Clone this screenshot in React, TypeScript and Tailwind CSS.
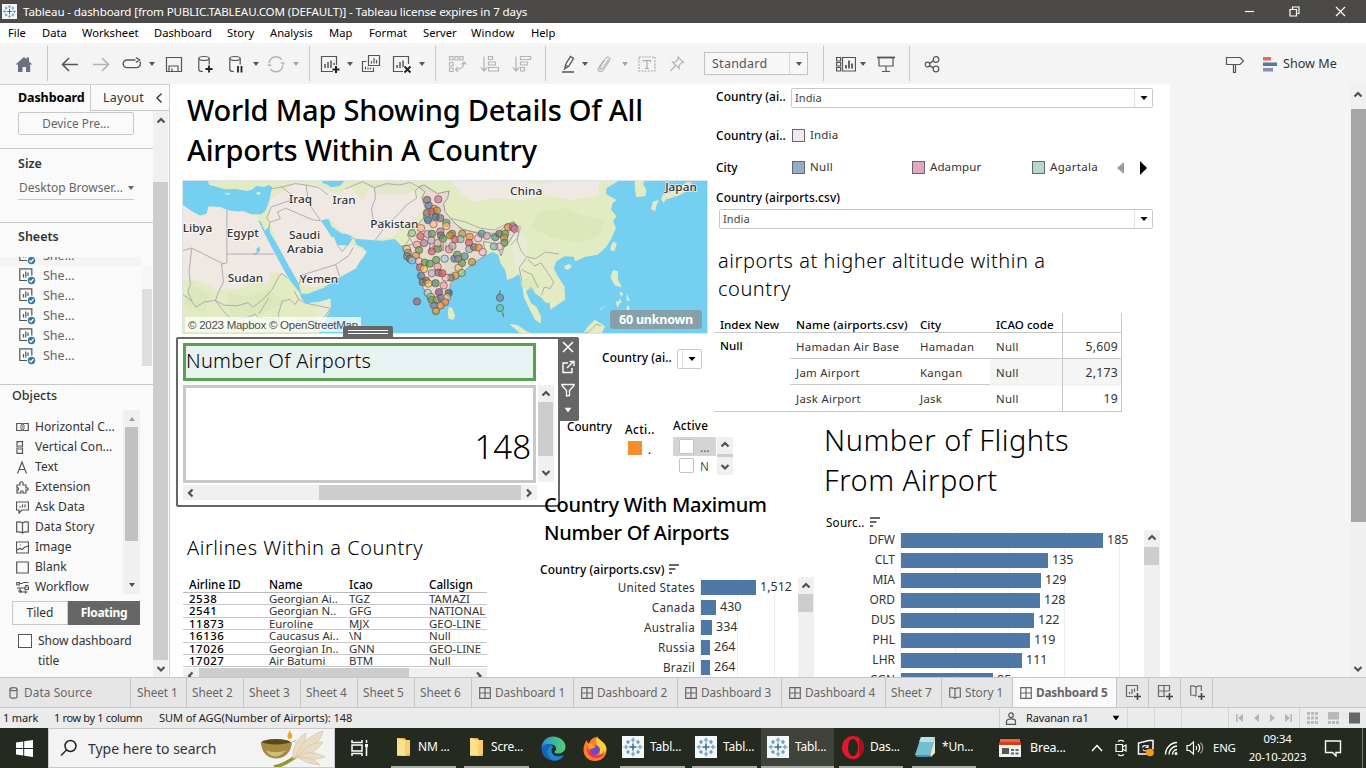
import React from "react";
import type { ReactNode } from "react";

/* ---------- shared bits ---------- */

function Svg({ children, className = "", w = 20, h = 20 }: { children: ReactNode; className?: string; w?: number; h?: number }) {
  return (
    <svg width={w} height={h} viewBox={`0 0 ${w} ${h}`} fill="none" stroke="currentColor" strokeWidth="1.2" className={`shrink-0 ${className}`}>
      {children}
    </svg>
  );
}

function Caret({ className = "" }: { className?: string }) {
  return (
    <svg width="6" height="4" viewBox="0 0 6 4" className={`shrink-0 ${className}`}>
      <path d="M0 0h6L3 4z" fill="currentColor" />
    </svg>
  );
}

const chevrons = {
  up: "M4.5 9.5l3.500-3.500 3.500 3.500",
  down: "M4.500 6l3.500 3.500L11.500 6",
  left: "M9.500 4.500L6 8l3.500 3.500",
  right: "M6 4.500L9.500 8 6 11.500",
};

function Chevron({ dir, className = "" }: { dir: keyof typeof chevrons; className?: string }) {
  return (
    <svg width="16" height="16" viewBox="0 0 16 16" fill="none" stroke="#505050" strokeWidth="2.200" className={`shrink-0 ${className}`}>
      <path d={chevrons[dir]} />
    </svg>
  );
}

function TableauMark({ size }: { size: number }) {
  return (
    <svg width={size} height={size} viewBox="0 0 22 22" fill="none" className="shrink-0 bg-[#f5f6f7]">
      <path d="M11 7.5v7M7.5 11h7" stroke="#2f6f98" strokeWidth="1.5" />
      <path d="M11 1.5v5M8.7 4h4.600M11 15.500v5M8.700 18h4.600M1.500 11h5M4 8.700v4.600M15.500 11h5M18 8.700v4.600" stroke="#5e9cc4" strokeWidth="1.200" />
      <path d="M6 4v4M4 6h4M16 4v4M14 6h4M6 14v4M4 16h4M16 14v4M14 16h4" stroke="#4a8fb8" strokeWidth="1.200" />
    </svg>
  );
}

/* ---------- title bar & menu ---------- */

function TitleBar() {
  return (
    <div className="flex h-[23px] shrink-0 items-center bg-[#4b4a48] pl-[2px] text-white">
      <TableauMark size={15} />
      <span className="ml-[6px] text-[11.600px] leading-[23px] tracking-[-0.130px]">
        Tableau - dashboard [from PUBLIC.TABLEAU.COM (DEFAULT)] - Tableau license expires in 7 days
      </span>
      <div className="ml-auto flex items-center pr-[20px]">
        <Svg w={11} h={11}><path d="M1 5.500h9" /></Svg>
        <Svg w={11} h={11} className="ml-[34px]"><path d="M1 3.500h6.500v6.500H1zM3.500 3.500V1H10v6.500H7.500" /></Svg>
        <Svg w={11} h={11} className="ml-[35px]"><path d="M1 1l9 9M10 1l-9 9" /></Svg>
      </div>
    </div>
  );
}

function MenuBar() {
  return (
    <div className="flex h-[20px] shrink-0 items-center bg-white pl-[8px] text-[11.200px] leading-[22px] text-black">
      <span className="w-[34px]">File</span>
      <span className="w-[40px]">Data</span>
      <span className="w-[72px]">Worksheet</span>
      <span className="w-[73px]">Dashboard</span>
      <span className="w-[43px]">Story</span>
      <span className="w-[59px]">Analysis</span>
      <span className="w-[40px]">Map</span>
      <span className="w-[54px]">Format</span>
      <span className="w-[48px]">Server</span>
      <span className="w-[60px] tracking-[0.150px]">Window</span>
      <span>Help</span>
    </div>
  );
}

/* ---------- toolbar ---------- */

function Sep({ className }: { className: string }) {
  return <div className={`h-[35px] w-px shrink-0 bg-[#c9c9c9] ${className}`} />;
}

function Toolbar() {
  return (
    <div className="flex h-[41px] shrink-0 items-center bg-[#f4f4f4] text-[#555]">
      <Svg className="ml-[14px] text-[#66727f]"><path d="M1.500 10.500L10 3l2.500 2.200V3.500h2.500v4L18.500 10.500h-2.300V18h-4.200v-5H8.500v5H4v-7.500z" fill="currentColor" stroke="none" /></Svg>
      <Sep className="ml-[13px]" />
      <Svg className="ml-[12px]"><path d="M18 10.500H3M9 4l-6.500 6.500L9 17" strokeWidth="1.600" /></Svg>
      <Svg className="ml-[11px] text-[#b4b4b4]"><path d="M2 10.500h15M11 4l6.500 6.500L11 17" strokeWidth="1.600" /></Svg>
      <Svg className="ml-[11px]"><path d="M13.500 6H5a3.800 3.800 0 000 7.600h10a3.800 3.800 0 002.800-6M14 3.500l3.500 2.500L14 8.500" strokeWidth="1.400" /></Svg>
      <Caret className="ml-[7px]" />
      <Svg className="ml-[9px]"><path d="M2.500 3.500h15v14h-15zM5 17.500v-5.500h9v5.500M8 17v-2.500" /></Svg>
      <Svg className="ml-[11px]"><ellipse cx="9" cy="4.500" rx="5.200" ry="2" /><path d="M3.800 4.500v11c0 1.500 2 2 4 2M14.200 4.500v6" /><path d="M14 11.500v7M10.500 15h7" stroke="#222" strokeWidth="1.800" /></Svg>
      <Svg className="ml-[11px]"><ellipse cx="9" cy="4.500" rx="5.200" ry="2" /><path d="M3.800 4.500v11c0 1.500 2 2 4 2M14.200 4.500v6" /><path d="M12 12v6.500M15.500 12v6.500" stroke="#222" strokeWidth="1.800" /></Svg>
      <Caret className="ml-[7px]" />
      <Svg className="ml-[7px] text-[#b4b4b4]"><path d="M3.200 9a7 7 0 0112.500-3.500M16.800 11.500A7 7 0 014.300 15" strokeWidth="1.400" /><path d="M14 8.500h5l-2 2.500zM1 12l2.500-2.500L6 12z" fill="currentColor" stroke="none" /></Svg>
      <Caret className="ml-[7px] text-[#a5a5a5]" />
      <Sep className="ml-[10px]" />
      <Svg className="ml-[10px]"><path d="M13 17.500H1.500v-15h15V11" /><path d="M5 14v-4M8 14V8M11 14V6.500M14 11V9" strokeWidth="1.500" /><path d="M16 12v7M12.500 15.500h7" stroke="#222" strokeWidth="2" /></Svg>
      <Caret className="ml-[7px]" />
      <Svg className="ml-[8px]"><path d="M7.500 1.500h11v10h-11zM5.500 7.500H1.500v10h11v-4M10.500 9.500V7M13 9.500V4M15.500 9.500V6M4.500 15.500v-3M7 15.500v-2M9.500 15.500v-2" /></Svg>
      <Svg className="ml-[11px]"><path d="M11 17.500H1.500v-15h15V10" /><path d="M5 14v-3M8 14V8M11 13V6.500" strokeWidth="1.500" /><path d="M12.500 12.500l6 6M18.500 12.500l-6 6" stroke="#222" strokeWidth="1.900" /></Svg>
      <Caret className="ml-[7px]" />
      <Sep className="ml-[10px]" />
      <Svg className="ml-[12px] text-[#b4b4b4]"><path d="M1.500 2.500H5V6H1.500zM7 2.500h3V6H7zM12 2.500h3V6h-3zM1.500 8.500H5V12H1.500zM1.500 14H5v3.500H1.500zM16 8.500c0 4-3 7-8 7M13.500 10.500l2.500-2.500 2.500 2.500M10 13l-2.500 2.500L10 18" /></Svg>
      <Svg className="ml-[12px] text-[#b4b4b4]"><path d="M4 2.500v14M1 13.500l3 3.500 3-3.500M8.500 2.500h4v3h-4zM8.500 8h7v3h-7zM8.500 13.500h10v3.500h-10z" /></Svg>
      <Svg className="ml-[12px] text-[#b4b4b4]"><path d="M4 2.500v14M1 13.500l3 3.500 3-3.500M8.500 2.500h10v3h-10zM8.500 8h7v3h-7zM8.500 13.500h4v3.500h-4z" /></Svg>
      <Sep className="ml-[13px]" />
      <Svg className="ml-[12px]"><path d="M7.500 10.500L12.500 2.500l3 2L10.500 12.500l-3.500 2zM7 10.800l3.300 2M6 16l1.200-2M4 18h12" strokeWidth="1.300" /></Svg>
      <Caret className="ml-[4px]" />
      <Svg className="ml-[7px] text-[#b4b4b4]"><path d="M13.500 5.500l-6 9c-1 1.500-3 .5-2.500-1l5.500-9c1.500-2.500 5.500-1 4 2l-6.500 10c-2 2.500-6 .5-4.500-2.500l5-7.500" /></Svg>
      <Caret className="ml-[7px] text-[#a5a5a5]" />
      <Svg className="ml-[9px] text-[#a9a9a9]"><path d="M2 3h16v14H2z" strokeDasharray="2 1.200" /><path d="M6.500 8V6.500h7V8M10 6.500v8M8 14.500h4" /></Svg>
      <Svg className="ml-[10px] text-[#b4b4b4]"><path d="M11 3l5.500 5.500-2 .2-2.500 2.800.2 3L5.500 8l3.200-.2L11 5zM8.500 11.500L3.500 17" /></Svg>
      <div className="ml-[17px] flex h-[23px] w-[104px] shrink-0 items-center border border-[#c3c3c3] bg-[#f7f7f7]">
        <span className="ml-[7px] text-[12.500px] leading-[21px] tracking-[0.250px] text-[#555]">Standard</span>
        <div className="ml-auto flex h-full w-[18px] items-center justify-center border-l border-[#d8d8d8]"><Caret /></div>
      </div>
      <Sep className="ml-[15px]" />
      <Svg className="ml-[12px]"><path d="M.600 3.500h4V7h-4zM.600 8.500h4V12h-4zM.600 13.500h4V17h-4zM6.500 3.500h13v13.500h-13z" /><path d="M10 14.500v-3.500M13 14.500v-8M16 14.500v-5" strokeWidth="1.800" /></Svg>
      <Caret className="ml-[4px]" />
      <Svg className="ml-[10px]"><path d="M1 3.500h18" strokeWidth="1.800" /><path d="M3 4v8h14V4M10 12v5M6 17.500h8" /></Svg>
      <Sep className="ml-[13px]" />
      <Svg className="ml-[12px]"><circle cx="5.500" cy="10.500" r="2.300" /><circle cx="14" cy="5.500" r="2.800" /><circle cx="14" cy="15" r="2.800" /><path d="M7.500 9.300l4-2.500M7.500 11.700l4 2.200" strokeWidth="1.400" /></Svg>
      <Svg className="ml-auto"><path d="M1.500 3.500H15L18.500 7 15 10.500H1.500zM8.500 10.500v8h2v-8" /></Svg>
      <svg width="14" height="16" viewBox="0 0 14 16" className="ml-[18px] shrink-0">
        <path d="M0 1h8v3.500H0z" fill="#e8685a" /><path d="M0 6.500h14V10H0z" fill="#4e79a7" /><path d="M0 12h10v3.500H0z" fill="#8f8bb8" />
      </svg>
      <span className="ml-[6px] mr-[29px] w-[54px] shrink-0 whitespace-nowrap text-[12.600px] leading-[40px] text-[#333]">Show Me</span>
    </div>
  );
}

/* ---------- side bar ---------- */

function SheetItem() {
  return (
    <div className="flex h-[20px] items-center pl-[19px]">
      <Svg w={17} h={18} className="text-[#555]">
        <path d="M8 13.500H.800V1.800h12v6.700M4.500 10.500V7M6.800 10.500V4.500M9 9V5.500" />
        <circle cx="12.500" cy="13.500" r="3.700" fill="#317aa5" stroke="none" />
        <path d="M10.500 13.500l1.500 1.500 2.500-3" stroke="#fff" />
      </Svg>
      <span className="ml-[7px] text-[12.500px] leading-[20px] text-[#666]">She...</span>
    </div>
  );
}

const objects: { name: string; icon: ReactNode }[] = [
  { name: "Horizontal C...", icon: <><path d="M.700 2.500h5v7h-5zM7.300 2.500h5v7h-5z" /><path d="M4 4h5v4H4z" fill="#aaa" stroke="none" /></> },
  { name: "Vertical Con...", icon: <><path d="M1 .700h5.500v5H1zM1 7.300h5.500v5H1z" /><path d="M1.500 4h4.500v5H1.500z" fill="#aaa" stroke="none" /></> },
  { name: "Text", icon: <path d="M1.500 12.500L6 1l4.500 11.500M3 8.500h6" /> },
  { name: "Extension", icon: <path d="M4 3c-1-3 4-3 3 0v1h3v3c3-1 3 3 0 2v3H7c1-3-3-3-2 0H1V9c2 1 2-3 0-2V4h3z" /> },
  { name: "Ask Data", icon: <path d="M.500 1h12v8H6l-3 3V9H.500zM4 6.500V5M6.500 6.500v-3M9 6.500v-3" /> },
  { name: "Data Story", icon: <path d="M6.500 2C5 1 3 .700.700 1v10c2.300-.300 4.300 0 5.800 1 1.500-1 3.500-1.300 5.800-1V1c-2.300-.300-4.300 0-5.800 1zM6.500 2v10" /> },
  { name: "Image", icon: <path d="M.500 1h12v11H.500zM1 9l3-1.500 2 1L9 6l3-1M4 4h1" /> },
  { name: "Blank", icon: <path d="M.700 1h11.600v11H.700z" /> },
  { name: "Workflow", icon: <path d="M.800 1.500h2.500v2.500H.800zM3.500 2.500H7M7 1.500h5.500M9 4.500h3.500M1 7h8M9 6v2.500h3.500V6zM4 7v5M2 10h4M4.500 11h7M9.500 9.500v3" /> },
];

function SideBar() {
  return (
    <aside className="flex w-[170px] shrink-0 flex-col border-r border-t border-[#cfcfcf] bg-[#fafafa] text-[#333]">
      <div className="flex h-[26px] shrink-0">
        <div className="w-[90px] pl-[18px] text-[12.500px] font-bold leading-[26px] tracking-[-0.100px] text-black">Dashboard</div>
        <div className="flex grow items-center border-b border-l border-[#c8c8c8] pl-[12px] text-[12.500px] leading-[25px] tracking-[0.200px]">
          Layout
          <Svg w={8} h={12} className="ml-auto mr-[6px]"><path d="M6.500 1.500L2 6l4.500 4.500" strokeWidth="1.400" /></Svg>
        </div>
      </div>
      <div className="flex min-h-0 grow">
        <div className="flex w-[153px] shrink-0 flex-col overflow-hidden">
          <div className="ml-[18px] mt-[1px] h-[23px] w-[116px] shrink-0 rounded-[2px] border border-[#c8c8c8] text-center text-[11.800px] leading-[20px] text-[#666]">Device Pre...</div>
          <div className="mt-[13px] h-[74px] shrink-0 border-t border-[#c8c8c8]">
            <div className="pl-[18px] pt-[5px] text-[12.500px] font-semibold leading-[20px]">Size</div>
            <div className="ml-[18px] mt-[3px] flex h-[23px] w-[116px] items-center justify-between border-b border-[#c8c8c8] text-[12px] text-[#666]">
              <span className="ml-[1px]">Desktop Browser...</span><Caret />
            </div>
          </div>
          <div className="h-[162px] shrink-0 border-t border-[#c8c8c8]">
            <div className="h-[34px] pl-[18px] pt-[4px] text-[12.500px] font-semibold leading-[20px]">Sheets</div>
            <div className="flex">
              <div className="h-[127px] w-[142px] overflow-hidden">
                <div className="flex h-[9px] flex-col justify-end overflow-hidden bg-[#f4f4f4]"><SheetItem /></div>
                <SheetItem /><SheetItem /><SheetItem /><SheetItem /><SheetItem />
              </div>
              <div className="mt-[9px] h-[100px] w-[10px] bg-[#f6f6f6] pt-[23px]"><div className="h-[77px] bg-[#dedede]" /></div>
            </div>
          </div>
          <div className="shrink-0 border-t border-[#c8c8c8] pl-[12px]">
            <div className="pt-px text-[12.500px] font-medium leading-[20px]">Objects</div>
            <div className="mt-[4px] flex h-[184px] w-[128px] justify-between">
              <div className="flex flex-col pt-[7px]">
                {objects.map((o) => (
                  <div key={o.name} className="flex h-[20px] shrink-0 items-center pl-[4px]">
                    <Svg w={13} h={13} className="text-[#555]">{o.icon}</Svg>
                    <span className="ml-[6px] whitespace-nowrap text-[12.100px] leading-[20px]">{o.name}</span>
                  </div>
                ))}
              </div>
              <div className="flex w-[17px] shrink-0 flex-col items-center bg-[#f0f0f0]">
                <Caret className="mt-[7px] rotate-180 text-[#9a9a9a]" />
                <div className="mt-[6px] h-[114px] w-[13px] bg-[#c1c1c1]" />
                <Caret className="mb-[7px] mt-auto text-[#505050]" />
              </div>
            </div>
            <div className="mt-[7px] flex h-[24px] w-[128px] text-[12px] leading-[22px]">
              <div className="w-[56px] border border-[#c8c8c8] text-center">Tiled</div>
              <div className="grow bg-[#666] text-center font-bold leading-[24px] tracking-[-0.300px] text-white">Floating</div>
            </div>
            <div className="mt-[6px] flex text-[12.100px] leading-[20px]">
              <div className="ml-[6px] mt-[3px] size-[14px] border border-[#555] bg-white" />
              <div className="ml-[6px] w-[100px] tracking-[-0.100px]">Show dashboard title</div>
            </div>
          </div>
        </div>
        <div className="flex w-[15px] shrink-0 flex-col bg-[#f0f0f0]">
          <Chevron dir="up" className="mt-[2px]" />
          <div className="mt-[53px] h-[478px] bg-[#cdcdcd]" />
          <Chevron dir="down" className="mt-auto" />
        </div>
      </div>
    </aside>
  );
}

/* ---------- map ---------- */

const airports: [number, number, string][] = [
  [731, 345, "#79706e"], [764, 343, "#d37295"], [736, 362, "#4e79a7"], [752, 372, "#f28e2b"], [760, 377, "#b6992d"], [743, 380, "#e15759"], [730, 385, "#9d7660"],
  [732, 400, "#86bcb6"], [756, 396, "#2a5f96"], [734, 406, "#4e79a7"], [770, 400, "#79706e"], [788, 414, "#59a14f"], [750, 418, "#ffbe7d"], [788, 424, "#ffbe7d"],
  [713, 430, "#ffbe7d"], [686, 445, "#8cd17d"], [711, 454, "#e15759"], [732, 448, "#d4a6c8"], [745, 447, "#59a14f"], [770, 440, "#d37295"], [772, 452, "#79706e"],
  [778, 462, "#59a14f"], [805, 447, "#9d7660"], [799, 452, "#b6992d"], [814, 464, "#e15759"], [835, 447, "#b6992d"], [830, 463, "#86bcb6"], [857, 456, "#f28e2b"],
  [855, 474, "#e15759"], [882, 461, "#fabfd2"], [893, 447, "#499894"], [908, 453, "#d4a6c8"], [744, 467, "#d4a6c8"], [722, 475, "#b07aa1"], [701, 480, "#ff9d9a"],
  [671, 493, "#f1ce63"], [674, 504, "#b07aa1"], [707, 496, "#59a14f"], [672, 515, "#59a14f"], [698, 513, "#f28e2b"], [680, 522, "#79706e"], [686, 527, "#a0cbe8"],
  [745, 500, "#e15759"], [763, 492, "#59a14f"], [796, 494, "#ff9d9a"], [762, 475, "#d7b5a6"], [806, 484, "#bab0ac"], [707, 530, "#fabfd2"], [724, 534, "#59a14f"],
  [710, 548, "#e15759"], [722, 553, "#f1ce63"], [739, 537, "#59a14f"], [758, 526, "#59a14f"], [783, 522, "#a0cbe8"], [812, 522, "#4e79a7"], [820, 510, "#59a14f"],
  [824, 523, "#b07aa1"], [842, 515, "#499894"], [834, 535, "#59a14f"], [864, 532, "#b6992d"], [856, 493, "#86bcb6"], [870, 487, "#79706e"], [884, 489, "#f28e2b"],
  [896, 502, "#fabfd2"], [762, 546, "#ff9d9a"], [824, 550, "#ffbe7d"], [833, 565, "#8cd17d"], [815, 573, "#f28e2b"], [801, 579, "#79706e"], [786, 579, "#fabfd2"],
  [745, 566, "#d4a6c8"], [765, 564, "#79706e"], [776, 566, "#e15759"], [713, 574, "#4e79a7"], [718, 593, "#79706e"], [728, 588, "#9d5a30"], [735, 597, "#f1ce63"],
  [756, 596, "#3f8f50"], [780, 603, "#ff9d9a"], [733, 625, "#a0cbe8"], [766, 623, "#8b4a7f"], [795, 625, "#4c5870"], [742, 637, "#8cd17d"], [745, 646, "#59a14f"],
  [760, 647, "#b6992d"], [772, 640, "#4e79a7"], [790, 638, "#ffbe7d"], [784, 653, "#f28e2b"], [752, 662, "#4e79a7"], [771, 663, "#f28e2b"], [757, 680, "#b6992d"],
  [701, 651, "#b0576b"], [947, 640, "#79848e"], [947, 671, "#59c495"], [933, 457, "#499894"], [945, 447, "#79706e"], [962, 447, "#59a14f"], [971, 427, "#f28e2b"],
  [985, 427, "#b07aa1"], [990, 432, "#d37295"], [959, 459, "#b6992d"], [960, 474, "#59a14f"], [945, 486, "#fabfd2"], [929, 485, "#86bcb6"],
];

const countries: [number, number, string][] = [
  [356, 352, "Iraq"], [485, 353, "Iran"], [1024, 327, "China"], [1483, 315, "Japan"], [634, 426, "Pakistan"], [51, 439, "Libya"], [185, 453, "Egypt"],
  [368, 459, "Saudi"], [370, 501, "Arabia"], [193, 588, "Sudan"], [411, 591, "Yemen"],
];

function WorldMap() {
  return (
    <div className="relative ml-[12px] mt-[10px] h-[154px] w-[526px] shrink-0 overflow-hidden border border-[#dde3e6]">
      <svg width="524" height="152" viewBox="8 288 1552 458" preserveAspectRatio="none">
        <rect x="0" y="280" width="1570" height="480" fill="#74cff1" />
        <g fill="#e3ebc3">
          <path d="M78 280L86 300 110 306 132 313 165 312 196 318 212 314 225 303 248 306 262 300 272 306 267 330 262 352 252 378 240 388 212 388 184 378 170 385 138 375 118 366 84 364 78 387 58 392 30 378 8 360V760H395L420 735 432 700 446 672 445 642 412 652 372 656 358 640 354 625 325 588 300 545 275 500 258 465 244 438 230 406 238 410 250 437 264 425 266 445 285 476 303 508 322 545 340 570 352 600 358 628 378 628 425 610 466 582 520 552 528 530 540 522 552 502 540 488 522 480 514 458 508 456 498 482 465 482 455 455 445 460 434 435 416 408 420 400 440 404 448 425 480 448 500 444 518 462 560 466 600 468 635 463 656 484 672 516 698 518 704 540 712 590 728 630 742 672 757 688 776 668 796 638 800 598 832 568 868 536 904 512 925 502 942 510 948 535 962 556 968 586 985 580 1003 568 1012 598 1018 640 1030 665 1050 705 1068 718 1068 695 1055 668 1038 655 1024 620 1040 606 1052 628 1070 640 1082 655 1094 655 1096 676 1140 645 1138 606 1118 575 1106 550 1114 530 1138 515 1165 516 1170 530 1200 516 1236 510 1260 488 1275 465 1290 430 1282 408 1292 395 1276 375 1280 355 1292 345 1262 328 1262 310 1294 290V280z" />
          <path d="M1345 280h30l-4 18 10 18-4 17-26 4-4-20zM1400 350l18-4-8 16-4 18-12-8zM1428 330l42-16 30-22 14 0-4 20-30 18-42 14-6 10-8-10zM1285 470l8 8-8 22-12-4 4-18zM1138 544l14-6 8 8-12 10-10-4zM795 668l10 2 9 24-5 12-14-2-3-20zM974 718l24 4 30 20 30 12h-44zM1190 750l18-24 20-20 30 20-14 30zM1282 556l14 4 0 24 12 24-20-4-14-26zM1300 622l12 4-6 12zM1322 628l10 20-10 0zM1290 648l12 8-8 14zM1324 660l8 12-12 14zM1262 660l-20 20 2-6zM1300 640l8 14-10 2z" />
          <path d="M128 326l22-2-8 6zM222 324l18-4-8 12z" />
        </g>
        <g fill="#f0e9e3">
          <path d="M8 362L58 394 78 390 84 366 118 368 138 377 184 381 212 390 230 395V406L260 468 320 582 300 566 270 560 258 600 225 588 180 612 110 616 60 590 8 585z" />
          <path d="M267 345L262 400 285 474 322 545 352 598 390 608 428 604 466 580 520 550 550 502 514 482 465 482 434 435 416 408 440 400 478 440 518 460 570 464 628 458 656 420 700 400 720 370 708 330 660 300 560 310 540 350 500 300 470 330 405 300 340 296z" />
          <path d="M800 286H1010L1060 300 1110 288H1240V330L1160 345 1080 330 1010 345 930 340 870 350 830 325z" />
          <path d="M408 654l37-9-2 30-20 40-26-20zM980 460l30-20 20 20-8 80-30 28z" opacity=".5" />
        </g>
        <g fill="#cfe3ad" opacity=".35">
          <path d="M1060 380l80-10 60 24 60 10-20 50-60 20-80-14-60-30zM140 625l60 10 60-20 50 40-60 30-100 20zM560 300l80-10 60 20-30 20-90 0zM30 600l60 30-20 60-60-30zM1000 600l30-20 40 20-30 20z" />
        </g>
        <path d="M422 280l-2 14 18 6 8 7 26-4 14-14V280z" fill="#74cff1" />
        <path d="M215 510l12-8-2-10 11-7 0 14-14 13z" fill="#74cff1" />
        <g fill="none" stroke="#a5a3ae" strokeWidth="2.600" strokeLinejoin="round">
          <path d="M138 376V535L122 538 128 592M138 508H278M128 538L34 490 8 498M34 490L26 560 30 600 22 620 34 650M128 592L112 625 104 648 72 652 46 668 34 650 8 630M104 648L130 662 168 664 200 655 216 668 250 640 272 615 290 580 300 566 318 580M104 648L128 680 152 705 190 702 222 690 232 700 280 705 300 735M232 690L250 660 262 640M338 620L350 645 340 660 325 645 302 650 290 690 300 740M350 645L372 656 445 672 420 708 340 708M340 708L300 740" />
          <path d="M267 312L300 306 340 296 372 300M372 300L378 340 390 370 414 405M300 306L330 330 322 348 270 366M270 366L256 400 266 412 296 402 288 382 312 370 392 405 416 408M266 412L262 430M465 482L480 500 512 458M512 488L500 512 460 540 410 556 358 572 352 600M460 540L472 575M372 300L410 308 438 330M488 312L540 290 575 308 578 340 566 372 572 408 600 436 578 465M575 308L610 296 650 300 680 292 706 306M572 408L620 412 648 386 670 360 700 340 696 318 706 306M680 460L668 480 656 484" />
          <path d="M800 400L845 412 888 430 930 436 960 420 985 412 1008 428 998 460 980 480M806 412L840 435 895 446 934 445M980 420l22 20-4 30 12 30 14 16 28 6 30-20 40 6M1024 520l-20 30 8 40M1030 524l20 20 18-10 20 30 18 28-10 20-18-4-8 24M1012 556l30 14 18 40" />
          <path d="M1190 748l20-6 22-22 14 4" />
        </g>
        <path d="M706 306L722 300 740 312 762 326 796 318 792 340 780 356 784 380 800 400 830 432 888 448 934 452 960 425 988 410 998 430 975 470 962 480 950 514 940 484 918 474 898 470 904 512 868 536 832 568 800 598 796 638 776 668 757 688 742 672 728 630 712 590 704 540 698 520 672 518 656 486 690 478 672 450 700 424 720 400 726 370 716 340 724 320z" fill="#e9d3d6" fillOpacity=".7" stroke="#8c8490" strokeWidth="2.400" />
        <path d="M780 530l30-16 20 20-8 40-30 10zM770 350l-8 10 14 24z" fill="#d5dbc0" opacity=".5" />
        <path d="M948 618l-4 14M954 684l4 14" stroke="#777" strokeWidth="4" />
        <text x="771" y="500" textAnchor="middle" fontSize="31" fill="#7b5c7a" opacity=".8">India</text>
        <g stroke="#55504d" strokeOpacity=".65" strokeWidth="2.800" fillOpacity=".68">
          {airports.map(([x, y, c], i) => <circle key={i} cx={x} cy={y} r="11" fill={c} />)}
        </g>
        <g fontSize="35" fontWeight="500" textAnchor="middle" fill="#333" stroke="#fff" strokeOpacity=".75" strokeWidth="5" paintOrder="stroke">
          {countries.map(([x, y, n]) => <text key={n} x={x} y={y + 3}>{n}</text>)}
        </g>
      </svg>
      <div className="absolute bottom-[1px] left-[2px] h-[15px] w-[176px] whitespace-nowrap bg-white/75 pl-[3px] font-['Liberation_Sans'] text-[11.500px] font-normal leading-[16px] tracking-[-0.260px] text-[#4c4c4c]">© 2023 Mapbox © OpenStreetMap</div>
      <div className="absolute bottom-[4px] right-[5px] h-[19px] w-[92px] rounded-[3px] bg-[#899ba2]/90 text-center text-[12.500px] font-bold leading-[19px] tracking-[-0.200px] text-white">60 unknown</div>
    </div>
  );
}

/* ---------- left half of the dashboard ---------- */

const airlines = [
  ["2538", "Georgian Ai..", "TGZ", "TAMAZI"],
  ["2541", "Georgian N..", "GFG", "NATIONAL"],
  ["11873", "Euroline", "MJX", "GEO-LINE"],
  ["16136", "Caucasus Ai..", "\\N", "Null"],
  ["17026", "Georgian In..", "GNN", "GEO-LINE"],
  ["17027", "Air Batumi", "BTM", "Null"],
];

function AirlinesTable() {
  return (
    <section className="w-[370px] shrink-0 pl-[13px] pt-[199px]">
      <h2 className="pl-[4px] text-[20px] font-light leading-[28px] tracking-[0.530px] text-black">Airlines Within a Country</h2>
      <div className="mt-[13px] w-[304px] overflow-hidden text-[11.400px]">
        <div className="grid h-[18px] grid-cols-[80px_80px_80px_64px] border-b border-[#bbb] pl-[6px] text-[11.700px] font-medium leading-[18px] text-black">
          <span>Airline ID</span><span>Name</span><span>Icao</span><span>Callsign</span>
        </div>
        {airlines.map((r) => (
          <div key={r[0]} className="grid h-[12.400px] grid-cols-[80px_80px_80px_64px] whitespace-nowrap border-b border-[#c8c8c8] pl-[6px] leading-[12px] text-[#333]">
            <span className="font-medium tracking-[0.550px] text-black">{r[0]}</span><span>{r[1]}</span><span>{r[2]}</span><span>{r[3]}</span>
          </div>
        ))}
        <div className="mt-[1px] flex h-[16px] items-center bg-[#f0f0f0]">
          <Chevron dir="left" />
          <div className="h-full w-[210px] bg-[#cdcdcd]" />
          <Chevron dir="right" className="ml-auto" />
        </div>
      </div>
    </section>
  );
}

const byCountry: [string, string, number][] = [
  ["United States", "1,512", 55], ["Canada", "430", 15], ["Australia", "334", 11], ["Russia", "264", 9], ["Brazil", "264", 9],
];

function SortMark() {
  return (
    <svg width="11" height="11" viewBox="0 0 11 11" className="ml-[5px] shrink-0"><path d="M0 1h10M0 5h6.500M0 9h3" stroke="#666" strokeWidth="1.800" /></svg>
  );
}

function CountryCounts() {
  return (
    <section className="relative z-10 flex w-[280px] shrink-0 flex-col">
      <div className="ml-[62px] mt-[14px] flex h-[20px] items-center">
        <span className="-mt-[4px] w-[75px] text-[11.900px] font-medium leading-[16px] tracking-[0.080px] text-black">Country (ai..</span>
        <div className="flex h-[20px] w-[25px] items-center justify-end rounded-[2px] border border-[#c8c8c8] pr-[6px] text-black">
          <div className="mr-[6px] h-full w-px bg-[#e0e0e0]" /><Caret className="scale-x-[1.200]" />
        </div>
      </div>
      <div className="ml-[27px] mt-[48px] flex h-[74px] text-[11.700px] font-medium leading-[16px] text-black">
        <div className="w-[58px] pt-px">Country</div>
        <div className="w-[48px] pt-[4px] tracking-[0.400px]">
          Acti..
          <div className="flex pl-[3px] pt-[4px]"><div className="size-[14px] bg-[#f28e2b]" /><span className="ml-[6px] font-normal">.</span></div>
        </div>
        <div>
          <div className="tracking-[0.200px]">Active</div>
          <div className="mt-[4px] flex h-[38px] font-normal text-[#555]">
            <div className="w-[43px]">
              <div className="flex h-[19px] items-center bg-[#d4d4d4] pl-[6px]"><div className="size-[15px] rounded-[2px] border border-[#c3c3c3] bg-white" /><span className="ml-[6px]">...</span></div>
              <div className="flex h-[19px] items-center pl-[6px]"><div className="size-[15px] rounded-[2px] border border-[#c3c3c3] bg-white" /><span className="ml-[6px]">N</span></div>
            </div>
            <div className="ml-px flex w-[16px] flex-col bg-[#f0f0f0]"><Chevron dir="up" /><div className="mt-px h-[3px] bg-[#cdcdcd]" /><Chevron dir="down" className="mt-auto" /></div>
          </div>
        </div>
      </div>
      <h2 className="ml-[4px] w-[240px] text-[20px] font-medium leading-[28px] tracking-[-0.270px] text-black">Country With Maximum Number Of Airports</h2>
      <div className="mt-[14px] flex h-[16px] items-center text-[11.900px] font-medium leading-[16px] tracking-[0.100px] text-black">Country (airports.csv)<SortMark /></div>
      <div className="flex h-[120px]">
        <div className="flex w-[258px] flex-col bg-[linear-gradient(#eee,#eee),linear-gradient(#eee,#eee),linear-gradient(#eee,#eee)] bg-[length:1px_100%] bg-[position:160px_0,197px_0,234px_0] bg-no-repeat">
          {byCountry.map(([n, v, w]) => (
            <div key={n} className="flex h-[20px] items-center text-[11.800px] leading-[20px] text-[#333]">
              <span className="w-[155px] text-right text-[11.700px] tracking-[0.300px]">{n}</span>
              <div className="ml-[6px] mr-[4px] h-[15px] bg-[#4e79a7]" style={{ width: w }} />
              <span className="text-[12.500px]">{v}</span>
            </div>
          ))}
        </div>
        <div className="flex w-[16px] flex-col bg-[#f0f0f0]"><Chevron dir="up" className="mt-px" /><div className="h-[18px] w-[15px] bg-[#cdcdcd]" /></div>
      </div>
    </section>
  );
}

function SelectedPanel() {
  return (
    <div className="absolute left-[6px] top-[242px]">
      <div className="ml-[167px] flex h-[11px] w-[50px] flex-col justify-center gap-[2px] rounded-t-[2px] bg-[#666] px-[5px]">
        <div className="h-px bg-white" /><div className="h-px bg-white" />
      </div>
      <div className="flex items-start">
        <div className="h-[170px] w-[384px] rounded-[2px] border-2 border-[#666] bg-white pl-[5px] pt-[4px]">
          <div className="h-[38px] w-[353px] border-[3px] border-[#59a14f] bg-[#e8f2f1] text-[20px] font-light leading-[30px] tracking-[0.300px] text-black">Number Of Airports</div>
          <div className="mt-[4px] flex">
            <div className="h-[98px] w-[353px] border-[3px] border-[#c8c8c8] pr-[2px] pt-[35px] text-right text-[33px] font-light leading-[48px] text-black">148</div>
            <div className="ml-[2px] flex h-[97px] w-[16px] flex-col bg-[#f0f0f0]">
              <Chevron dir="up" className="mt-px" /><div className="h-[54px] w-[15px] bg-[#cdcdcd]" /><Chevron dir="down" className="mb-px mt-auto" />
            </div>
          </div>
          <div className="mt-[2px] flex h-[15px] w-[354px] items-center bg-[#f0f0f0]">
            <Chevron dir="left" /><div className="ml-auto h-full w-[202px] bg-[#cdcdcd]" /><Chevron dir="right" />
          </div>
        </div>
        <div className="-ml-[2px] flex h-[84px] w-[21px] flex-col items-center rounded-r-[2px] bg-[#666] pr-px pt-[3px] text-white">
          <Svg w={14} h={14}><path d="M2 2l10 10M12 2L2 12" strokeWidth="1.500" /></Svg>
          <Svg w={14} h={14} className="mt-[6px]"><path d="M7 3H2v9.500h9V8M6 8l6-6M8.500 1.500H13V6" strokeWidth="1.400" /></Svg>
          <Svg w={14} h={14} className="mt-[9px]"><path d="M1 1.500h12v1L8.500 7.500v5l-3 .5V7.500L1 2.500z" strokeWidth="1.300" /></Svg>
          <Caret className="mt-[11px] scale-[1.200]" />
        </div>
      </div>
    </div>
  );
}

/* ---------- right half of the dashboard ---------- */

function Dropdown({ className, value }: { className: string; value: string }) {
  return (
    <div className={`flex h-[20px] items-center rounded-[2px] border border-[#c8c8c8] text-[11px] leading-[18px] text-[#444] ${className}`}>
      <span className="ml-[3px] tracking-[0.100px]">{value}</span>
      <div className="ml-auto flex h-full w-[18px] items-center justify-center border-l border-[#e0e0e0] text-black"><Caret className="scale-x-[1.200]" /></div>
    </div>
  );
}

function Filters() {
  const label = "w-[76px] shrink-0 font-medium tracking-[0.080px] text-black";
  return (
    <div className="pl-[8px] text-[11.900px] leading-[16px] text-[#333]">
      <div className="flex pt-[4px]"><span className={label}>Country (ai..</span><Dropdown className="-ml-px w-[362px]" value="India" /></div>
      <div className="mt-[17px] flex h-[20px] items-center">
        <span className={label}>Country (ai..</span>
        <div className="size-[13px] border border-[#666] bg-[#f3e8f1]" /><span className="ml-[5px] text-[11.500px] tracking-[0.150px]">India</span>
      </div>
      <div className="mt-[12px] flex h-[20px] items-center text-[11.500px] tracking-[0.300px]">
        <span className="w-[76px] shrink-0 text-[11.900px] font-medium tracking-normal text-black">City</span>
        <div className="flex w-[120px] items-center"><div className="size-[13px] border border-[#666] bg-[#94aeca]" /><span className="ml-[5px]">Null</span></div>
        <div className="flex w-[120px] items-center"><div className="size-[13px] border border-[#666] bg-[#e4a9c0]" /><span className="ml-[5px] tracking-[0.100px]">Adampur</span></div>
        <div className="flex w-[85px] items-center"><div className="size-[13px] border border-[#666] bg-[#b6d7d0]" /><span className="ml-[5px]">Agartala</span></div>
        <svg width="30" height="14" viewBox="0 0 30 14" className="mt-[2px]"><path d="M7 1v12L0 7z" fill="#9b9b9b" /><path d="M23 0v14l7-7z" fill="#000" /></svg>
      </div>
      <div className="mt-[12px] font-medium leading-[16px] tracking-[0.080px] text-black">Country (airports.csv)</div>
      <Dropdown className="ml-[3px] mt-[4px] w-[434px]" value="India" />
    </div>
  );
}

function AltitudeTable() {
  const rows = [
    ["Hamadan Air Base", "Hamadan", "Null", "5,609"],
    ["Jam Airport", "Kangan", "Null", "2,173"],
    ["Jask Airport", "Jask", "Null", "19"],
  ];
  return (
    <div className="pl-[6px]">
      <h2 className="mt-[18px] w-[370px] pl-[4px] text-[20px] font-light leading-[28px] tracking-[0.540px] text-black">airports at higher altitude within a country</h2>
      <div className="mt-[10px] w-[408px] border-r border-[#c8c8c8] text-[11.400px]">
        <div className="grid h-[20px] grid-cols-[76px_124px_76px_72px_1fr] border-b border-[#c8c8c8] text-[11.600px] font-medium leading-[23px] text-black">
          <span className="pl-[6px]">Index New</span><span className="whitespace-nowrap pl-[6px] tracking-[0.200px]">Name (airports.csv)</span><span className="pl-[6px]">City</span><span className="whitespace-nowrap pl-[6px]">ICAO code</span><span className="border-l border-[#c8c8c8]" />
        </div>
        <div className="flex border-b border-[#c8c8c8]">
          <div className="w-[76px] pl-[6px] text-[11.600px] font-medium leading-[25px] text-black">Null</div>
          <div className="grow divide-y divide-[#c8c8c8]">
            {rows.map((r, i) => (
              <div key={r[0]} className="grid h-[26px] grid-cols-[124px_76px_72px_1fr] leading-[27px] tracking-[0.280px] text-[#333]">
                <span className="whitespace-nowrap pl-[6px]">{r[0]}</span><span className="pl-[6px]">{r[1]}</span>
                <span className={i === 1 ? "bg-[#f5f5f5] pl-[6px]" : "pl-[6px]"}>{r[2]}</span>
                <span className={i === 1 ? "border-l border-[#c8c8c8] bg-[#f5f5f5] pr-[3px] text-right text-[12.200px]" : "border-l border-[#c8c8c8] pr-[3px] text-right text-[12.200px]"}>{r[3]}</span>
              </div>
            ))}
          </div>
        </div>
      </div>
    </div>
  );
}

const flights: [string, number, number][] = [
  ["DFW", 185, 202], ["CLT", 135, 147], ["MIA", 129, 140], ["ORD", 128, 139], ["DUS", 122, 133], ["PHL", 119, 129], ["LHR", 111, 121], ["CGN", 85, 92],
];

function Flights() {
  return (
    <div className="pl-[112px]">
      <h2 className="mt-[8px] w-[290px] pl-[4px] text-[29px] font-light leading-[40px] tracking-[0.500px] text-black">Number of Flights From Airport</h2>
      <div className="mt-[14px] flex h-[16px] items-center pl-[6px] text-[11.700px] leading-[16px] tracking-[0.200px] text-black">Sourc..<SortMark /></div>
      <div className="flex h-[160px]">
        <div className="w-[324px] bg-[linear-gradient(#eee,#eee),linear-gradient(#eee,#eee),linear-gradient(#eee,#eee),linear-gradient(#eee,#eee),linear-gradient(#eee,#eee)] bg-[length:1px_100%] bg-[position:80px_0,135px_0,189px_0,244px_0,299px_0] bg-no-repeat">
          {flights.map(([n, v, w]) => (
            <div key={n} className="flex h-[20px] items-center text-[12px] leading-[20px] text-[#333]">
              <span className="w-[75px] text-right">{n}</span>
              <div className="ml-[6px] mr-[4px] h-[15px] bg-[#4e79a7]" style={{ width: w }} />
              <span className="text-[12.500px]">{v}</span>
            </div>
          ))}
        </div>
        <div className="flex w-[16px] flex-col bg-[#f0f0f0]"><Chevron dir="up" /><div className="mt-px h-[18px] w-[15px] bg-[#cdcdcd]" /></div>
      </div>
    </div>
  );
}

/* ---------- bottom bars ---------- */

function GridIcon() {
  return <Svg w={12} h={12} className="mr-[4px]"><path d="M.700.700h10.600v10.600H.700zM6 .700v10.600M.700 6h10.600" /></Svg>;
}

function BookIcon() {
  return <Svg w={12} h={12} className="mr-[4px]"><path d="M6 2C4.500 1 3 .700 .700 1v9c2 0 4 0 5.300 1.300C7.500 10 9 10 11.300 10V1C9 .700 7.500 1 6 2zM6 2v9" /></Svg>;
}

function Tab({ className, children }: { className: string; children: ReactNode }) {
  return <div className={`flex shrink-0 items-center whitespace-nowrap border-r border-[#c6c6c6] ${className}`}>{children}</div>;
}

function SheetTabs() {
  const add = <path d="M12.500 9v7M9 12.500h7" stroke="#444" strokeWidth="1.600" />;
  return (
    <div className="flex h-[31px] shrink-0 border-b border-t border-[#c6c6c6] bg-[#e6e6e6] text-[11.800px] leading-[29px] tracking-[-0.060px] text-[#666]">
      <Tab className="w-[131px] pl-[9px]"><Svg w={9} h={12} className="mr-[6px]"><ellipse cx="4.500" cy="2.200" rx="3.500" ry="1.500" /><path d="M1 2.200v7.500c0 2 7 2 7 0V2.200" /></Svg><span className="tracking-[0.100px]">Data Source</span></Tab>
      <Tab className="w-[56px] pl-[6px]">Sheet 1</Tab>
      <Tab className="w-[57px] pl-[5px]">Sheet 2</Tab>
      <Tab className="w-[57px] pl-[5px]">Sheet 3</Tab>
      <Tab className="w-[57px] pl-[5px]">Sheet 4</Tab>
      <Tab className="w-[57px] pl-[5px]">Sheet 5</Tab>
      <Tab className="w-[57px] pl-[5px]">Sheet 6</Tab>
      <Tab className="w-[102px] pl-[7px]"><GridIcon />Dashboard 1</Tab>
      <Tab className="w-[104px] pl-[7px]"><GridIcon />Dashboard 2</Tab>
      <Tab className="w-[104px] pl-[7px]"><GridIcon />Dashboard 3</Tab>
      <Tab className="w-[104px] pl-[7px]"><GridIcon />Dashboard 4</Tab>
      <Tab className="w-[56px] pl-[5px]">Sheet 7</Tab>
      <Tab className="w-[71px] pl-[7px]"><BookIcon />Story 1</Tab>
      <Tab className="w-[104px] bg-[#fafafa] pl-[7px] font-bold tracking-[-0.180px]"><GridIcon />Dashboard 5</Tab>
      <Tab className="w-[32px] pl-[8px]"><Svg w={17} h={17}><path d="M8 12.500H1.500v-11h11V7M4.500 10V8M7 10V5M9.500 8V4.500" />{add}</Svg></Tab>
      <Tab className="w-[32px] pl-[8px]"><Svg w={17} h={17}><path d="M8 12.500H1.500v-11h11V7M7 1.500v11M1.500 7h11" />{add}</Svg></Tab>
      <Tab className="w-[32px] pl-[8px]"><Svg w={17} h={17}><path d="M7 3C5.500 2 4 1.700 1.700 2v9c2 0 4 0 5.300 1.300M7 3c1.500-1 3-1.300 5.300-1v5M7 3v9" />{add}</Svg></Tab>
    </div>
  );
}

function StatusBar() {
  return (
    <div className="flex h-[20px] shrink-0 items-center bg-[#ebebeb] pl-[3px] text-[11px] leading-[20px] tracking-[-0.150px] text-[#222]">
      <span className="w-[51px]">1 mark</span><span className="w-[105px] tracking-[-0.350px]">1 row by 1 column</span><span className="tracking-[-0.050px]">SUM of AGG(Number of Airports): 148</span>
      <div className="ml-auto flex h-full w-[128px] items-center border-l border-[#d0d0d0] pl-[5px]">
        <Svg w={12} h={13} className="text-[#555]"><circle cx="6" cy="3.200" r="2.300" /><path d="M1.500 9.500c0-3.500 9-3.500 9 0v2.800h-9z" /></Svg>
        <span className="ml-[9px]">Ravanan ra1</span><Caret className="ml-auto mr-[8px] scale-[1.200] text-black" />
      </div>
      <div className="h-full w-[27px] border-l border-[#d6d6d6]" /><div className="h-full w-[27px] border-l border-[#d6d6d6]" /><div className="h-full w-[47px] border-l border-[#d6d6d6]" />
      <div className="flex h-full w-[71px] items-center border-l border-[#d6d6d6] pl-[7px]">
        <svg width="56" height="8" viewBox="0 0 56 8" fill="#b5b5b5"><path d="M0 0h1.500v8H0zM7 0v8L2 4zM23 0v8l-5-4zM34 0v8l5-4zM49 0v8l5-4zM54.500 0H56v8h-1.500z" /></svg>
      </div>
      <div className="flex h-full w-[67px] items-center border-l border-[#d6d6d6] pl-[7px]">
        <svg width="54" height="12" viewBox="0 0 54 12" fill="#b9b9b9"><path d="M0 0h3v3H0zM4 0h3v3H4zM8 0h3v3H8zM0 4.500h3v3H0zM4 4.500h3v3H4zM8 4.500h3v3H8zM0 9h3v3H0zM4 9h3v3H4zM8 9h3v3H8zM21 0h11v7.500H21zM21 9h3v3h-3zM25 9h3v3h-3zM29 9h3v3h-3z" /><path d="M42 .500h11v11H42z" fill="#666" /></svg>
      </div>
    </div>
  );
}

function Folder() {
  return (
    <svg width="16" height="20" viewBox="0 0 16 20" className="shrink-0"><path d="M1 1h8l1 2h4v16H1z" fill="#e2b04a" /><path d="M1 1l8 2v16l-8-1z" fill="#fbe08e" /><path d="M9 3h5v13.500L9 19z" fill="#f6cf6b" /></svg>
  );
}

function Task({ icon, name, className = "" }: { icon: ReactNode; name: string; className?: string }) {
  return (
    <div className={`flex h-full shrink-0 items-center whitespace-nowrap border-b-2 border-[#a9aba6] ${className}`}>
      {icon}<span className="ml-[6px]">{name}</span>
    </div>
  );
}

function TaskBar() {
  return (
    <div className="flex h-[40px] shrink-0 items-center bg-[#252a20] text-[12px] tracking-[-0.200px] text-white">
      <svg width="17" height="17" viewBox="0 0 17 17" fill="#fff" className="ml-[16px] shrink-0"><path d="M0 2.400L7.200 1.400V8H0zM8.200 1.200L17 0v8H8.200zM0 9h7.200v6.600L0 14.600zM8.200 9H17v8l-8.800-1.200z" /></svg>
      <div className="ml-[15px] flex h-full w-[287px] shrink-0 items-center border border-[#c9c9c9] bg-[#f3f3f3] text-[#333]">
        <Svg w={18} h={18} className="ml-[11px] text-[#222]"><circle cx="10.500" cy="7" r="5.500" strokeWidth="1.500" /><path d="M6.500 11L1 16.500" strokeWidth="1.500" /></Svg>
        <span className="ml-[10px] text-[14px] tracking-[-0.030px]">Type here to search</span>
        <svg width="70" height="38" viewBox="0 0 70 38" className="ml-auto mr-[4px]">
          <path d="M14 38C24 36 32 31 40 24" stroke="#8f9a33" strokeWidth="3.500" fill="none" />
          <g fill="#eadcc4" stroke="#cdb897" strokeWidth=".500">
            <path d="M33 30C32 18 38 8 46 4 46 14 42 24 33 30z" /><path d="M35 30C38 16 50 6 63 2 60 14 50 24 35 30z" /><path d="M36 29C44 18 54 13 63 13 58 21 48 28 36 29z" /><path d="M37 27c10-5 20-4 28 1-9 3-19 4-28-1z" /><path d="M38 28c9 0 17 2 22 8-8-1-15-2-22-8z" />
          </g>
          <ellipse cx="16" cy="14" rx="15" ry="4" fill="#57481d" /><path d="M1 13c0 22 30 22 31 0 3 0 4-1 4-2-8 5-27 6-35 2z" fill="#a58a43" /><path d="M6 21c3 8 14 9 20 0-6 3-14 3-20 0z" fill="#d2bc78" />
          <path d="M29 10c-4-4 1-5 0-9 4 5 5 8 0 9z" fill="#f6a21f" />
        </svg>
      </div>
      <Svg w={18} h={18} className="ml-[16px]"><path d="M1 1v2.500h10V1M1 6h10v6H1zM1 17v-2.500h10V17M15.500 1v3M15.500 7.500v9.500" strokeWidth="1.500" /><path d="M14 5h3v3h-3z" fill="#fff" stroke="none" /></Svg>
      <Task className="ml-[22px] w-[65px] pl-[5px]" icon={<Folder />} name="NM ..." />
      <Task className="ml-[8px] w-[65px] pl-[5px]" icon={<Folder />} name="Scre..." />
      <svg width="25" height="25" viewBox="0 0 25 25" className="ml-[12px] shrink-0">
        <defs><linearGradient id="ed" x1="0" x2="1"><stop offset="0" stopColor="#2495dd" /><stop offset="1" stopColor="#55d36b" /></linearGradient></defs>
        <path d="M.500 12C1 4 7 0 13 .500c7 .500 12 5.500 11.500 11-.500 4-4 6-8 6-3 0-4-1-2-3 1.500-2 0-5.500-4-6C6 8 2 9 .500 12z" fill="url(#ed)" />
        <path d="M.500 12C3 7 9 7.500 11 9.500 7 11 6.500 17 10 20c4 3.500 10 2 13-1-3 5-9 7-14 5C3 22 .500 17 .500 12z" fill="#1565b5" />
        <path d="M11 9.500C6 10 4 20 12 24.500c5 .500 9-2 11-5.500-4 2-10 2-12-2-1-3-.500-5 1.500-6z" fill="#1b86d3" />
      </svg>
      <svg width="24" height="25" viewBox="0 0 24 25" className="ml-[17px] shrink-0">
        <path d="M12 1c5 3 12 6 11.500 14C23 21 18 25 12 25 5 25 .500 20 .500 14c0-4 1-7 3.500-10 0 2 1 3 2 3.500C8 3 9 3 12 1z" fill="#ff7d26" />
        <path d="M14 0c1 4 9 6 9.500 13C22 20 16 20 16 14c0-4-5-5-2-14z" fill="#ffcf3a" /><path d="M4 10C3 16 7 22 13 22s9-4 8-8c-1 8-14 7-17-4z" fill="#ee2f57" /><circle cx="12" cy="14" r="5" fill="#7446c8" /><path d="M5 8c4-1 6 1 8 3-2 0-3 2-5 2-2 0-3-3-3-5z" fill="#ff9c2b" />
      </svg>
      <Task className="ml-[13px] w-[65px] pl-[2px]" icon={<TableauMark size={22} />} name="Tabl..." />
      <Task className="ml-[7px] w-[65px] pl-[3px]" icon={<TableauMark size={22} />} name="Tabl..." />
      <Task className="ml-[4px] w-[73px] bg-[#40433c] pl-[6px]" icon={<TableauMark size={22} />} name="Tabl..." />
      <Task className="ml-[5px] w-[64px] pl-[3px]" icon={<svg width="22" height="23" viewBox="0 0 22 23" className="shrink-0"><ellipse cx="11" cy="11.500" rx="11" ry="11.500" fill="#e3192b" /><path d="M11 0A11 11.500 0 0111 23A11 11.500 0 0017 21V2z" fill="#a90e1d" /><ellipse cx="11" cy="11.500" rx="5" ry="8.800" fill="#252a20" /></svg>} name="Das..." />
      <Task className="ml-[9px] w-[64px] pl-[2px]" icon={<svg width="22" height="22" viewBox="0 0 22 22" className="shrink-0"><path d="M7 1h14l-5 18H1z" fill="#72bfce" /><path d="M21 1v16l-4 4-1-2z" fill="#e9e5d2" /><path d="M7 1h14l-1.500 5H5z" fill="#b6e1e6" /><path d="M1 19l15 0 1 2H3z" fill="#4793a5" /></svg>} name="*Un..." />
      <svg width="22" height="18" viewBox="0 0 22 18" className="ml-[23px] shrink-0"><path d="M1 0h20v4H1z" fill="#f3633b" /><path d="M0 4h22v14H0z" fill="#f2f2f2" /><path d="M0 3h22v3H0z" fill="#cf3f20" /><path d="M3 9h7v6H3z" fill="#555" /><path d="M12 10h3v2h-3zM16.500 10h3v2h-3zM12 13.500h3v2h-3zM16.500 13.500h3v2h-3z" fill="#666" /></svg>
      <span className="ml-[9px] text-[12.500px]">Brea...</span>
      <Svg w={14} h={12} className="ml-auto"><path d="M2 9l5-5.500L12 9" strokeWidth="1.500" /></Svg>
      <Svg w={12} h={18} className="ml-[11px]"><path d="M1 5.500h6.500v7H1zM7.500 8l3.500-2v6l-3.500-2M3 2.500c2-1.500 4-1.500 6 0M3 15.500c2 1.500 4 1.500 6 0" /></Svg>
      <Svg w={18} h={18} className="ml-[10px]"><path d="M12 15H1.500V4L12 1.500h4v9" strokeWidth="1.500" /><path d="M5.500 8.500c0-2 4-3 5-.500M11 6v2.500H8.500M11 10.500c-1 2-4 2-5 0" /><circle cx="13" cy="13.500" r="3.800" fill="#ff9a0e" stroke="none" /></Svg>
      <Svg w={14} h={14} className="ml-[9px]"><path d="M1.500 13.500A12 12 0 0113 1.500M5 13.500a8.500 8.500 0 018-8.500M8.500 13.500a5 5 0 014.500-5" strokeWidth="1.400" /><circle cx="12" cy="12.500" r="1.500" fill="#fff" stroke="none" /></Svg>
      <Svg w={18} h={16} className="ml-[8px]"><path d="M1 5.500h2.500L7.500 2v12L3.500 10.500H1zM10 6c1 1.300 1 2.700 0 4M12 4c2.300 2.700 2.300 5.300 0 8" /><path d="M14.500 2.500c3 3.700 3 7.300 0 11" stroke="#999" /></Svg>
      <span className="ml-[9px] w-[24px] text-[11.400px]">ENG</span>
      <div className="ml-[5px] w-[71px] whitespace-nowrap text-center text-[11.300px] leading-[18px] tracking-[-0.150px]">09:34<br />20-10-2023</div>
      <Svg w={18} h={18} className="ml-[11px]"><path d="M1.500 2h15v11.500h-4.500v3.500l-3.500-3.500h-7z" strokeWidth="1.400" /></Svg>
      <div className="ml-[20px] mr-[3px] h-full w-px bg-[#73766f]" />
    </div>
  );
}

export default function App() {
  return (
    <div className="flex h-[768px] w-[1366px] flex-col overflow-hidden bg-white font-['Noto_Sans','Open_Sans',sans-serif]">
      <TitleBar />
      <MenuBar />
      <Toolbar />
      <div className="flex h-[593px] shrink-0 overflow-hidden">
        <SideBar />
        <main className="flex h-[593px] w-[1000px] shrink-0 overflow-hidden bg-white">
          <div className="relative flex w-[538px] shrink-0 flex-col">
            <h1 className="w-[500px] pl-[17px] pt-[6px] text-[29px] font-medium leading-[40px] tracking-[-0.230px] text-black">World Map Showing Details Of All Airports Within A Country</h1>
            <WorldMap />
            <SelectedPanel />
            <div className="flex pt-px">
              <AirlinesTable />
              <CountryCounts />
            </div>
          </div>
          <div className="w-[462px] shrink-0">
            <Filters />
            <AltitudeTable />
            <Flights />
          </div>
        </main>
        <div className="flex grow justify-end bg-[#f4f4f4]">
          <div className="flex w-[16px] flex-col bg-[#f0f0f0]">
            <Chevron dir="up" className="mt-[3px]" />
            <div className="ml-px mt-[6px] h-[413px] bg-[#a6a6a6]" />
            <Chevron dir="down" className="mt-auto" />
          </div>
        </div>
      </div>
      <SheetTabs />
      <StatusBar />
      <TaskBar />
    </div>
  );
}
